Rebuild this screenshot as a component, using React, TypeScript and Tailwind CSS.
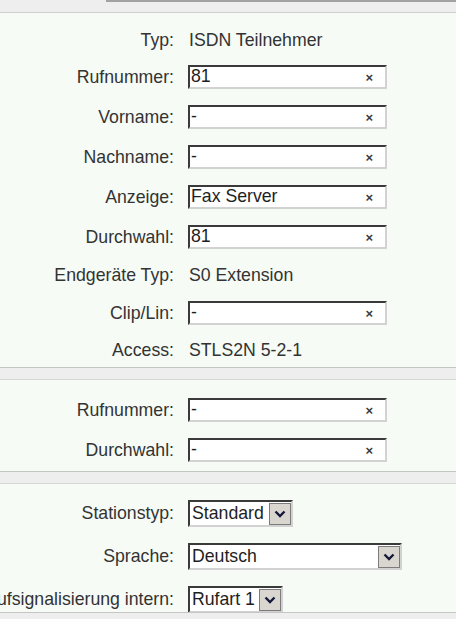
import type { ReactNode } from 'react';

interface RowProps {
  label: string;
  h: string;
  children: ReactNode;
}

function Row({ label, h, children }: RowProps) {
  return (
    <div className={`flex items-center ${h}`}>
      {/* label column, right aligned; long labels run off to the left */}
      <div className="w-[174px] shrink-0 flex justify-end">
        <span className="whitespace-nowrap">{label}</span>
      </div>
      <div className="ml-[14px] flex items-center">{children}</div>
    </div>
  );
}

function Field({ value }: { value: string }) {
  return (
    <div className="w-[199px] h-[24px] bg-white border-2 border-t-[#3a3a3a] border-l-[#3a3a3a] border-r-[#d2d2d2] border-b-[#d2d2d2] flex items-center pl-px pr-[12px] text-[#1e1e1e]">
      <span className="flex-1 leading-none">{value}</span>
      <span className="text-[13px] font-bold leading-none text-[#3a3a3a]">×</span>
    </div>
  );
}

function Select({ value, w }: { value: string; w: string }) {
  return (
    <div className={`${w} h-[27px] bg-white border-2 border-t-[#3a3a3a] border-l-[#3a3a3a] border-r-[#d2d2d2] border-b-[#d2d2d2] flex items-center`}>
      <span className="flex-1 pl-[2px] leading-none text-[#1e1e1e]">{value}</span>
      <span className="w-[22px] h-[22px] bg-[#d8d6cf] border border-[#7c7c7c] flex items-center justify-center">
        <svg width="12" height="8" viewBox="0 0 12 8">
          <polyline points="1.5,1.5 6,6 10.5,1.5" fill="none" stroke="#15183a" strokeWidth="2.4" />
        </svg>
      </span>
    </div>
  );
}

function Separator() {
  return <div className="h-[13px] bg-[#eeeeee] border-t border-b border-t-[#c6c6c6] border-b-[#d6d6d6]" />;
}

export default function App() {
  return (
    <div className="w-[456px] h-[619px] overflow-hidden bg-[#f6fbf6] text-[17.7px] text-[#333] font-['Liberation_Sans',Arial,sans-serif]">
      {/* top tab strip */}
      <div className="flex h-[13px] bg-[#eeeeee] border-b border-b-[#cfcfcf]">
        <div className="w-[106px]" />
        <div className="flex-1 border-t-2 border-t-[#a2a2a2]" />
      </div>

      {/* subscriber data */}
      <div className="pt-[10px]">
        <Row label="Typ:" h="h-[34px]">
          <span className="pl-px">ISDN Teilnehmer</span>
        </Row>
        <Row label="Rufnummer:" h="h-[40px]">
          <Field value="81" />
        </Row>
        <Row label="Vorname:" h="h-[40px]">
          <Field value="-" />
        </Row>
        <Row label="Nachname:" h="h-[40px]">
          <Field value="-" />
        </Row>
        <Row label="Anzeige:" h="h-[40px]">
          <Field value="Fax Server" />
        </Row>
        <Row label="Durchwahl:" h="h-[40px]">
          <Field value="81" />
        </Row>
        <Row label="Endgeräte Typ:" h="h-[36px]">
          <span className="pl-px">S0 Extension</span>
        </Row>
        <Row label="Clip/Lin:" h="h-[40px]">
          <Field value="-" />
        </Row>
        <Row label="Access:" h="h-[34px]">
          <span className="pl-px">STLS2N 5-2-1</span>
        </Row>
      </div>

      <Separator />

      {/* second number */}
      <div className="pt-[10px] pb-px">
        <Row label="Rufnummer:" h="h-[40px]">
          <Field value="-" />
        </Row>
        <Row label="Durchwahl:" h="h-[40px]">
          <Field value="-" />
        </Row>
      </div>

      <Separator />

      {/* station settings */}
      <div className="pt-[8px]">
        <Row label="Stationstyp:" h="h-[43px]">
          <Select value="Standard" w="w-[105px]" />
        </Row>
        <Row label="Sprache:" h="h-[43px]">
          <Select value="Deutsch" w="w-[214px]" />
        </Row>
        <div className="h-[34px] overflow-hidden pt-[8px]">
          <div className="flex">
            <div className="w-[174px] shrink-0 flex justify-end items-center">
              <span className="whitespace-nowrap">Rufsignalisierung intern:</span>
            </div>
            <div className="ml-[14px]">
              <Select value="Rufart 1" w="w-[95px]" />
            </div>
          </div>
        </div>
      </div>

      <Separator />
    </div>
  );
}
